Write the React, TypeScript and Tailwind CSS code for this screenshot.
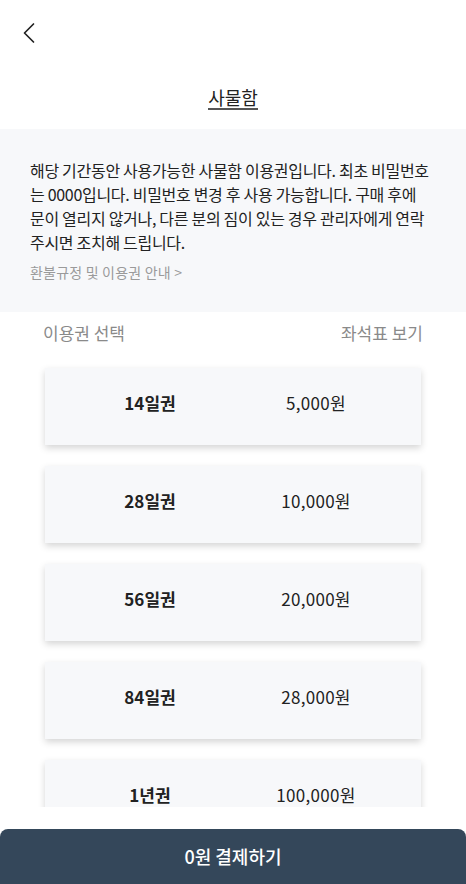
type Pass = { label: string; price: string }

const passes: Pass[] = [
  { label: "14일권", price: "5,000원" },
  { label: "28일권", price: "10,000원" },
  { label: "56일권", price: "20,000원" },
  { label: "84일권", price: "28,000원" },
  { label: "1년권", price: "100,000원" },
]

function BackIcon() {
  return (
    <svg width="14" height="22" viewBox="0 0 14 22" fill="none">
      <polyline
        points="11.5,2 2.5,11 11.5,20"
        stroke="#222"
        strokeWidth="1.7"
        strokeLinecap="round"
        strokeLinejoin="round"
      />
    </svg>
  )
}

export default function App() {
  return (
    <div
      className="flex h-[884px] w-[466px] flex-col overflow-hidden bg-white text-[#222]"
      style={{ fontFamily: '"Noto Sans CJK KR", "Noto Sans", sans-serif' }}
    >
      <div className="flex h-[86px] items-start pl-[22px] pt-[22px]">
        <button type="button" aria-label="back">
          <BackIcon />
        </button>
      </div>

      <div className="flex justify-center">
        <h1 className="border-b-2 border-[#555] text-[18px] leading-[22px] font-normal">사물함</h1>
      </div>

      <div className="mt-[19px] bg-[#f7f8fa] px-[30px] pt-[29px] pb-[30px]">
        <p className="text-[16px] leading-[24px] tracking-[-0.3px] break-all text-[#222]">
          해당 기간동안 사용가능한 사물함 이용권입니다. 최초 비밀번호
          <br />는 0000입니다. 비밀번호 변경 후 사용 가능합니다. 구매 후에
          <br />
          문이 열리지 않거나, 다른 분의 짐이 있는 경우 관리자에게 연락
          <br />
          주시면 조치해 드립니다.
        </p>
        <p className="mt-[8px] text-[14px] leading-[20px] tracking-[0.2px] text-[#9a9a9a]">
          환불규정 및 이용권 안내 &gt;
        </p>
      </div>

      <div className="flex items-center justify-between px-[43px] pt-[9px]">
        <span className="text-[17px] leading-[24px] text-[#8a8a8a]">이용권 선택</span>
        <span className="text-[17px] leading-[24px] text-[#8a8a8a]">좌석표 보기</span>
      </div>

      <div className="min-h-0 flex-1 overflow-hidden">
        <div className="flex flex-col gap-[21px] px-[45px] pt-[23px]">
          {passes.map((p) => (
            <div
              key={p.label}
              className="grid h-[77px] shrink-0 grid-cols-2 items-center bg-[#f7f8fa] px-[22px] pb-[8px] shadow-[0_3px_7px_rgba(0,0,0,0.17)]"
            >
              <span className="text-center text-[17px] font-bold">{p.label}</span>
              <span className="text-center text-[17px] tracking-[0.3px] text-[#222]">{p.price}</span>
            </div>
          ))}
        </div>
      </div>

      <div className="h-[22px] shrink-0" />

      <button
        type="button"
        className="h-[55px] w-full shrink-0 rounded-t-[8px] bg-[#34475a] text-[18px] font-medium text-white"
      >
        0원 결제하기
      </button>
    </div>
  )
}
